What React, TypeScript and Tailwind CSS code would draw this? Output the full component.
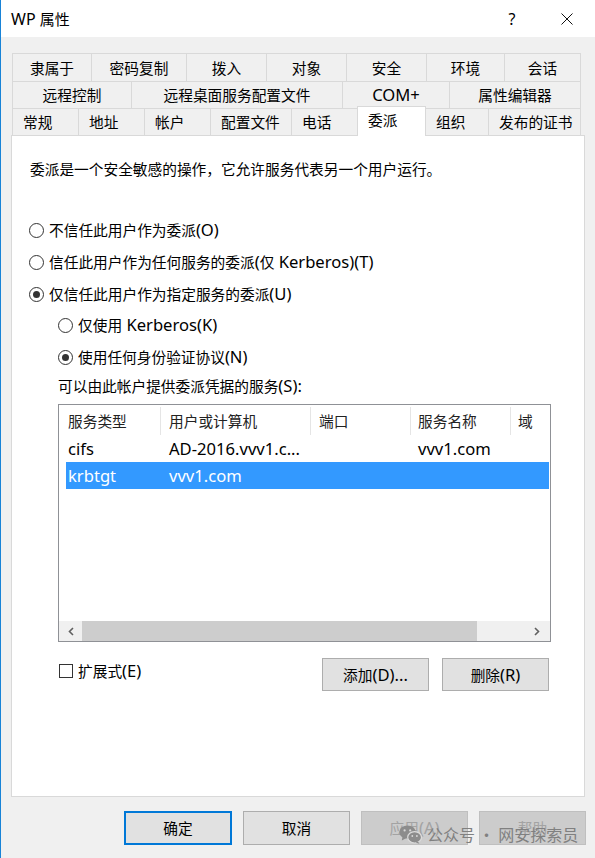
import React from "react";

type TabDef = { label: string; w: string };

const row1: TabDef[] = [
  { label: "隶属于", w: "w-[79px]" },
  { label: "密码复制", w: "w-[95px]" },
  { label: "拨入", w: "w-[80px]" },
  { label: "对象", w: "w-[80px]" },
  { label: "安全", w: "w-[80px]" },
  { label: "环境", w: "w-[78px]" },
  { label: "会话", w: "w-[77px]" },
];
const row2: TabDef[] = [
  { label: "远程控制", w: "w-[119px]" },
  { label: "远程桌面服务配置文件", w: "w-[211px]" },
  { label: "COM+", w: "w-[107px]" },
  { label: "属性编辑器", w: "w-[132px]" },
];
const row3: TabDef[] = [
  { label: "常规", w: "w-[66px]" },
  { label: "地址", w: "w-[66px]" },
  { label: "帐户", w: "w-[66px]" },
  { label: "配置文件", w: "w-[81px]" },
  { label: "电话", w: "w-[66px]" },
  { label: "委派", w: "w-[69px]" },
  { label: "组织", w: "w-[63px]" },
  { label: "发布的证书", w: "w-[93px]" },
];

/* Latin runs are rendered a little larger, as the UI font's Latin glyphs are */
function T({ s }: { s: string }) {
  const parts = s.split(/([\u0000-\u2fff]+)/).filter((p) => p.length > 0);
  return (
    <>
      {parts.map((p, i) =>
        /^[\u0000-\u2fff]+$/.test(p) ? (
          <span key={i} className="text-[16.6px]">
            {p}
          </span>
        ) : (
          <span key={i}>{p}</span>
        )
      )}
    </>
  );
}

function TabRow({ tabs, h, left }: { tabs: TabDef[]; h: string; left?: boolean }) {
  return (
    <div className={`flex ${h}`}>
      {tabs.map((t, i) => {
        const last = i === tabs.length - 1;
        const selected = t.label === "委派";
        if (selected) {
          return (
            <div
              key={t.label}
              className={`${t.w} -mt-[2px] -mb-px -mr-px relative z-10 bg-white border-t border-l border-r border-[#d9d9d9] flex items-center justify-start pl-[10px] pb-[3px]`}
            >
              {t.label}
            </div>
          );
        }
        return (
          <div
            key={t.label}
            className={`${t.w} bg-[#f0f0f0] border-t border-l ${last ? "border-r" : ""} border-[#d9d9d9] flex items-center whitespace-nowrap ${
              left ? "justify-start pl-[10px]" : "justify-center"
            }`}
          >
            <T s={t.label} />
          </div>
        );
      })}
    </div>
  );
}

function Radio({ checked, label }: { checked?: boolean; label: string }) {
  return (
    <div className="flex items-center h-[20px]">
      <span className="w-[15px] h-[15px] rounded-full border border-[#333333] bg-white flex items-center justify-center shrink-0">
        {checked && <span className="w-[7px] h-[7px] rounded-full bg-[#333333]" />}
      </span>
      <span className="ml-[5px] whitespace-nowrap">
        <T s={label} />
      </span>
    </div>
  );
}

function Chevron({ dir }: { dir: "left" | "right" }) {
  return (
    <svg width="6" height="9" viewBox="0 0 6 9" className="shrink-0">
      {dir === "left" ? (
        <path d="M5 1 L1.5 4.5 L5 8" fill="none" stroke="#606060" strokeWidth="1.6" />
      ) : (
        <path d="M1 1 L4.5 4.5 L1 8" fill="none" stroke="#606060" strokeWidth="1.6" />
      )}
    </svg>
  );
}

function WeChatIcon() {
  return (
    <svg width="23" height="19" viewBox="0 0 23 19">
      <ellipse cx="8.5" cy="7" rx="8.2" ry="6.6" fill="#8c8c8c" />
      <path d="M3.5 11.5 L2.8 15.5 L7 13.2 Z" fill="#8c8c8c" />
      <circle cx="5.6" cy="5.4" r="1.1" fill="#d8d8d8" />
      <circle cx="11.2" cy="5.4" r="1.1" fill="#d8d8d8" />
      <ellipse cx="15.6" cy="12.3" rx="6.9" ry="5.7" fill="#8c8c8c" stroke="#dcdcdc" strokeWidth="1.2" />
      <path d="M19 16.5 L20.4 18.8 L16.6 17.6 Z" fill="#8c8c8c" />
      <circle cx="13.3" cy="11" r="0.9" fill="#d8d8d8" />
      <circle cx="17.9" cy="11" r="0.9" fill="#d8d8d8" />
    </svg>
  );
}

export default function App() {
  return (
    <div className="w-[595px] h-[858px] bg-[#f0f0f0] border-l border-[#1883d7] relative flex flex-col text-black text-[14.7px] leading-[20px] font-[family-name:'Noto_Sans','Noto_Sans_CJK_SC',sans-serif] overflow-hidden">
      {/* Title bar */}
      <div className="h-[37px] bg-white flex items-center shrink-0">
        <span className="pl-[10px] text-[15px]">
          <span className="text-[16px]">WP </span>属性
        </span>
        <span className="ml-auto text-[16px] w-[20px] text-center mr-[39px]">?</span>
        <svg width="12" height="12" viewBox="0 0 12 12" className="mr-[22px]">
          <path d="M0.5 0.5 L11.5 11.5 M11.5 0.5 L0.5 11.5" stroke="#111" strokeWidth="1" />
        </svg>
      </div>

      {/* Tabs */}
      <div className="ml-[11px] w-[569px] mt-[16px] flex flex-col">
        <TabRow tabs={row1} h="h-[28px]" />
        <TabRow tabs={row2} h="h-[27px]" />
        <TabRow tabs={row3} h="h-[27px]" left />
      </div>

      {/* Panel */}
      <div className="ml-[10px] w-[574px] h-[662px] bg-white border border-[#d9d9d9] pl-[17px] flex flex-col shrink-0">
        <div className="mt-[23px] ml-px h-[20px] whitespace-nowrap">
          委派是一个安全敏感的操作，它允许服务代表另一个用户运行。
        </div>
        <div className="mt-[41px]">
          <Radio label="不信任此用户作为委派(O)" />
        </div>
        <div className="mt-[12px]">
          <Radio label="信任此用户作为任何服务的委派(仅 Kerberos)(T)" />
        </div>
        <div className="mt-[12px]">
          <Radio checked label="仅信任此用户作为指定服务的委派(U)" />
        </div>
        <div className="mt-[11px] ml-[29px]">
          <Radio label="仅使用 Kerberos(K)" />
        </div>
        <div className="mt-[12px] ml-[29px]">
          <Radio checked label="使用任何身份验证协议(N)" />
        </div>
        <div className="mt-[9px] ml-[29px] h-[20px] whitespace-nowrap">
          <T s="可以由此帐户提供委派凭据的服务(S):" />
        </div>

        {/* List view */}
        <div className="mt-[8px] ml-[29px] w-[493px] h-[238px] border border-[#8f9196] bg-white flex flex-col overflow-hidden">
          <div className="h-[31px] pt-[2px] pb-px flex shrink-0 text-[#222]">
            <div className="w-[102px] pl-[9px] flex items-center border-r border-[#e5e5e5]">服务类型</div>
            <div className="w-[150px] pl-[8px] flex items-center border-r border-[#e5e5e5]">用户或计算机</div>
            <div className="w-[100px] pl-[8px] flex items-center border-r border-[#e5e5e5]">端口</div>
            <div className="w-[100px] pl-[7px] flex items-center border-r border-[#e5e5e5]">服务名称</div>
            <div className="flex-1 pl-[7px] flex items-center">域</div>
          </div>
          <div className="h-[26px] flex items-center shrink-0 text-[16.6px]">
            <div className="w-[102px] pl-[9px]">cifs</div>
            <div className="w-[150px] pl-[8px] whitespace-nowrap">AD-2016.vvv1.c...</div>
            <div className="w-[100px] pl-[8px]"></div>
            <div className="w-[100px] pl-[7px]">vvv1.com</div>
            <div className="flex-1"></div>
          </div>
          <div className="h-[27px] ml-[7px] mr-px flex items-center shrink-0 bg-[#3399ff] text-white text-[16.6px]">
            <div className="w-[95px] pl-[2px]">krbtgt</div>
            <div className="w-[150px] pl-[8px]">vvv1.com</div>
            <div className="flex-1"></div>
          </div>
          <div className="flex-1" />
          <div className="h-[20px] bg-[#f0f0f0] flex items-center shrink-0">
            <div className="w-[23px] flex items-center justify-center">
              <Chevron dir="left" />
            </div>
            <div className="w-[395px] h-full bg-[#cdcdcd]" />
            <div className="flex-1" />
            <div className="w-[23px] flex items-center justify-center mr-[2px]">
              <Chevron dir="right" />
            </div>
          </div>
        </div>

        <div className="mt-[16px] ml-[29px] w-[493px] flex items-start">
          <div className="mt-[3px] ml-px flex items-center h-[20px]">
            <span className="w-[14px] h-[14px] border border-[#333333] bg-white shrink-0" />
            <span className="ml-[5px] whitespace-nowrap">
              <T s="扩展式(E)" />
            </span>
          </div>
          <div className="ml-auto mr-[2px] flex gap-[13px]">
            <div className="w-[107px] h-[33px] bg-[#e1e1e1] border border-[#adadad] flex items-center justify-center whitespace-nowrap">
              <T s="添加(D)..." />
            </div>
            <div className="w-[107px] h-[33px] bg-[#e1e1e1] border border-[#adadad] flex items-center justify-center whitespace-nowrap">
              <T s="删除(R)" />
            </div>
          </div>
        </div>
      </div>

      {/* Bottom buttons */}
      <div className="mt-[14px] ml-[123px] flex gap-[11px]">
        <div className="w-[108px] h-[34px] bg-[#e1e1e1] border-2 border-[#0078d7] flex items-center justify-center">
          确定
        </div>
        <div className="w-[107px] h-[34px] bg-[#e1e1e1] border border-[#adadad] flex items-center justify-center">
          取消
        </div>
        <div className="w-[107px] h-[34px] bg-[#cccccc] border border-[#bfbfbf] text-[#a3a3a3] flex items-center justify-center whitespace-nowrap">
          <T s="应用(A)" />
        </div>
        <div className="w-[107px] h-[34px] bg-[#cccccc] border border-[#bfbfbf] text-[#a3a3a3] flex items-center justify-center">
          帮助
        </div>
      </div>

      {/* Watermark */}
      <div className="absolute left-[398px] top-[824px] flex items-center pointer-events-none">
        <WeChatIcon />
        <span className="ml-[5px] text-[16px] leading-[20px] text-[#808080] whitespace-nowrap font-[family-name:'Noto_Sans_CJK_SC',sans-serif]">
          公众号 · 网安探索员
        </span>
      </div>
    </div>
  );
}
